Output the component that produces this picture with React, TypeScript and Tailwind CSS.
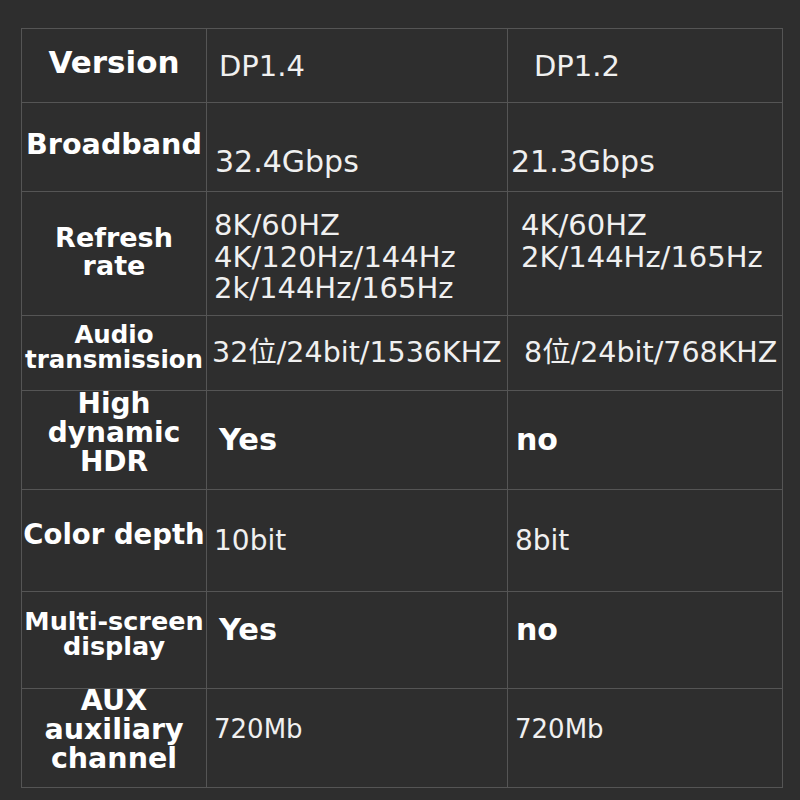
const labelFont = "font-['DejaVu_Sans','Noto_Sans_CJK_SC',sans-serif] font-bold text-white";
const valueFont = "font-['DejaVu_Sans','Noto_Sans_CJK_SC',sans-serif] text-[#f0f0f0]";

const cell = "border-r border-b border-[#555] flex";

export default function App() {
  return (
    <div className="w-[800px] h-[800px] bg-[#2e2e2e] pt-[28px] pl-[21px]">
      <div className="w-[762px] border-l border-t border-[#555] grid grid-cols-[185px_301px_275px] grid-rows-[74px_89px_124px_75px_99px_102px_97px_99px]">
        {/* Version */}
        <div className={`${cell} items-center justify-center pb-[7px]`}>
          <span className={`${labelFont} text-[31px] leading-[36px]`}>Version</span>
        </div>
        <div className={`${cell} items-center pl-[12px]`}>
          <span className={`${valueFont} text-[29px] leading-[34px]`}>DP1.4</span>
        </div>
        <div className={`${cell} items-center pl-[26px]`}>
          <span className={`${valueFont} text-[29px] leading-[34px]`}>DP1.2</span>
        </div>

        {/* Broadband */}
        <div className={`${cell} items-center justify-center pb-[7px]`}>
          <span className={`${labelFont} text-[28.6px] leading-[34px]`}>Broadband</span>
        </div>
        <div className={`${cell} items-center pl-[8px] pt-[29px]`}>
          <span className={`${valueFont} text-[30px] leading-[36px]`}>32.4Gbps</span>
        </div>
        <div className={`${cell} items-center pl-[3px] pt-[29px]`}>
          <span className={`${valueFont} text-[30px] leading-[36px]`}>21.3Gbps</span>
        </div>

        {/* Refresh rate */}
        <div className={`${cell} items-center justify-center pb-[4px]`}>
          <span className={`${labelFont} text-[27px] leading-[28px] text-center`}>
            Refresh
            <br />
            rate
          </span>
        </div>
        <div className={`${cell} items-start pl-[7px] pt-[18px]`}>
          <span className={`${valueFont} text-[29px] leading-[31.5px]`}>
            8K/60HZ
            <br />
            4K/120Hz/144Hz
            <br />
            2k/144Hz/165Hz
          </span>
        </div>
        <div className={`${cell} items-start pl-[13px] pt-[18px]`}>
          <span className={`${valueFont} text-[29px] leading-[31.5px]`}>
            4K/60HZ
            <br />
            2K/144Hz/165Hz
          </span>
        </div>

        {/* Audio transmission */}
        <div className={`${cell} items-center justify-center pb-[13px]`}>
          <span className={`${labelFont} text-[24.5px] leading-[25px] text-center`}>
            Audio
            <br />
            transmission
          </span>
        </div>
        <div className={`${cell} items-center pl-[5px]`}>
          <span className={`${valueFont} text-[28.5px] leading-[34px] whitespace-nowrap`}>32位/24bit/1536KHZ</span>
        </div>
        <div className={`${cell} items-center pl-[16px]`}>
          <span className={`${valueFont} text-[28.5px] leading-[34px] whitespace-nowrap`}>8位/24bit/768KHZ</span>
        </div>

        {/* HDR */}
        <div className={`${cell} items-center justify-center pb-[15px]`}>
          <span className={`${labelFont} text-[28px] leading-[29px] text-center`}>
            High
            <br />
            dynamic
            <br />
            HDR
          </span>
        </div>
        <div className={`${cell} items-center pl-[12px]`}>
          <span className={`${labelFont} text-[30.5px] leading-[36px]`}>Yes</span>
        </div>
        <div className={`${cell} items-center pl-[8px]`}>
          <span className={`${labelFont} text-[30px] leading-[36px]`}>no</span>
        </div>

        {/* Color depth */}
        <div className={`${cell} items-center justify-center pb-[14px]`}>
          <span className={`${labelFont} text-[27.5px] leading-[32px] whitespace-nowrap`}>Color depth</span>
        </div>
        <div className={`${cell} items-center pl-[7px]`}>
          <span className={`${valueFont} text-[28px] leading-[34px]`}>10bit</span>
        </div>
        <div className={`${cell} items-center pl-[7px]`}>
          <span className={`${valueFont} text-[28px] leading-[34px]`}>8bit</span>
        </div>

        {/* Multi-screen */}
        <div className={`${cell} items-center justify-center pb-[13px]`}>
          <span className={`${labelFont} text-[25.5px] leading-[25px] text-center whitespace-nowrap`}>
            Multi-screen
            <br />
            display
          </span>
        </div>
        <div className={`${cell} items-center pl-[12px] pb-[21px]`}>
          <span className={`${labelFont} text-[30.5px] leading-[36px]`}>Yes</span>
        </div>
        <div className={`${cell} items-center pl-[8px] pb-[21px]`}>
          <span className={`${labelFont} text-[30px] leading-[36px]`}>no</span>
        </div>

        {/* AUX */}
        <div className={`${cell} items-center justify-center pb-[17px]`}>
          <span className={`${labelFont} text-[28.5px] leading-[29px] text-center`}>
            AUX
            <br />
            auxiliary
            <br />
            channel
          </span>
        </div>
        <div className={`${cell} items-center pl-[7px] pb-[19px]`}>
          <span className={`${valueFont} text-[26px] leading-[32px]`}>720Mb</span>
        </div>
        <div className={`${cell} items-center pl-[7px] pb-[19px]`}>
          <span className={`${valueFont} text-[26px] leading-[32px]`}>720Mb</span>
        </div>
      </div>
    </div>
  );
}
